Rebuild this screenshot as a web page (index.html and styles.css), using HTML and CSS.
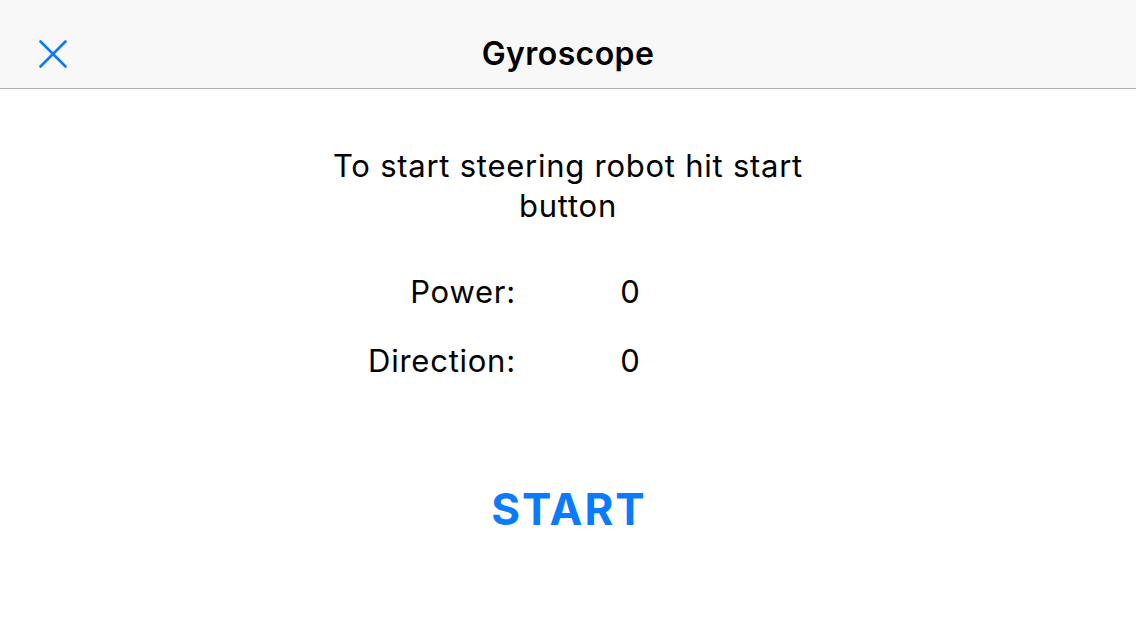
FILE: index.html
```html
<!DOCTYPE html>
<html>
<head>
<meta charset="utf-8">
<link rel="stylesheet" href="styles.css">
</head>
<body>
<header class="navbar">
  <button class="close" aria-label="Close">
    <svg width="28" height="28" viewBox="0 0 28 28"><path d="M1.5 1.5 L26.5 26.5 M26.5 1.5 L1.5 26.5" stroke="#0a7afe" stroke-width="2.6" stroke-linecap="round" fill="none"/></svg>
  </button>
  <h1 class="title">Gyroscope</h1>
</header>
<main class="content">
  <p class="intro">To start steering robot hit start button</p>
  <div class="stats">
    <div class="row"><span class="label">Power:</span><span class="value">0</span></div>
    <div class="row"><span class="label">Direction:</span><span class="value">0</span></div>
  </div>
  <button class="start">START</button>
</main>
</body>
</html>
```
FILE: styles.css
```css
html, body { margin: 0; padding: 0; background: #fff; }
body { font-family: Inter, "Liberation Sans", Arial, sans-serif; color: #000; width: 1136px; height: 640px; overflow: hidden; }
.navbar { height: 88px; background: #f8f8f8; border-bottom: 1px solid #b2b2b2; display: flex; align-items: center; justify-content: center; position: relative; }
.close { position: absolute; left: 39px; top: 40px; width: 28px; height: 28px; padding: 0; border: 0; background: none; display: flex; }
.title { margin: 20px 0 0; font-size: 32px; font-weight: 600; line-height: 40px; letter-spacing: 0.4px; }
.content { display: flex; flex-direction: column; align-items: center; }
.intro { margin: 57px 0 0; width: 500px; text-align: center; font-size: 31px; line-height: 40px; letter-spacing: 0.75px; }
.stats { margin-top: 46px; display: flex; flex-direction: column; gap: 29px; }
.row { display: flex; gap: 105px; font-size: 31px; line-height: 40px; letter-spacing: 0.75px; }
.label { width: 170px; text-align: right; margin-right: -0.75px; }
.value { width: 170px; text-align: left; }
.start { margin-top: 102px; border: 0; background: none; padding: 0 0 0 2px; font-family: inherit; font-size: 44px; font-weight: 700; letter-spacing: 2px; color: #0a7afe; line-height: 52px; }
```
